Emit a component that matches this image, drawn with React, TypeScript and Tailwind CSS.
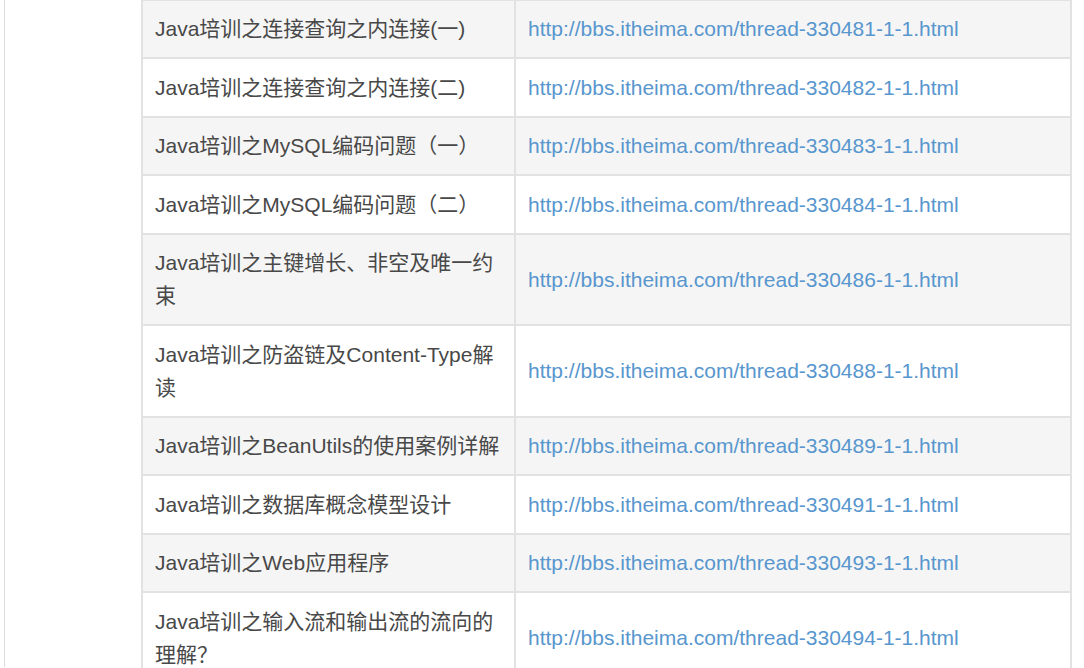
import React from 'react';

type Row = { title: string; id: string };

const rows: Row[] = [
  { title: 'Java培训之连接查询之内连接(一)', id: '330481' },
  { title: 'Java培训之连接查询之内连接(二)', id: '330482' },
  { title: 'Java培训之MySQL编码问题（一）', id: '330483' },
  { title: 'Java培训之MySQL编码问题（二）', id: '330484' },
  { title: 'Java培训之主键增长、非空及唯一约束', id: '330486' },
  { title: 'Java培训之防盗链及Content-Type解读', id: '330488' },
  { title: 'Java培训之BeanUtils的使用案例详解', id: '330489' },
  { title: 'Java培训之数据库概念模型设计', id: '330491' },
  { title: 'Java培训之Web应用程序', id: '330493' },
  { title: 'Java培训之输入流和输出流的流向的理解？', id: '330494' },
];

const App: React.FC = () => {
  return (
    <div
      className="h-[668px] overflow-hidden bg-white pl-[4px]"
      style={{ fontFamily: '"Liberation Sans", Arial, "Noto Sans CJK SC", sans-serif' }}
    >
      <div className="h-full border-l border-[#dcdcdc] pl-[136px] pr-[12px]">
        {/* 링크 테이블 */}
        <table className="mt-[-1.5px] w-full table-fixed border-collapse text-[21px] leading-[33px] text-[#484848]">
          <colgroup>
            <col className="w-[373px]" />
            <col />
          </colgroup>
          <tbody>
            {rows.map((row, i) => (
              <tr key={row.id} className={i % 2 === 0 ? 'bg-[#f5f5f5]' : 'bg-white'}>
                <td className="border-2 border-[#e2e2e2] px-[12px] py-[11.75px] align-middle">
                  {row.title}
                </td>
                <td className="border-2 border-[#e2e2e2] px-[12px] py-[11.75px] align-middle">
                  <a
                    href="#"
                    className="text-[#5896ce] no-underline"
                    style={{ fontFamily: '"Liberation Sans", Arial, sans-serif' }}
                  >
                    http://bbs.itheima.com/thread-{row.id}-1-1.html
                  </a>
                </td>
              </tr>
            ))}
          </tbody>
        </table>
      </div>
    </div>
  );
};

export default App;
